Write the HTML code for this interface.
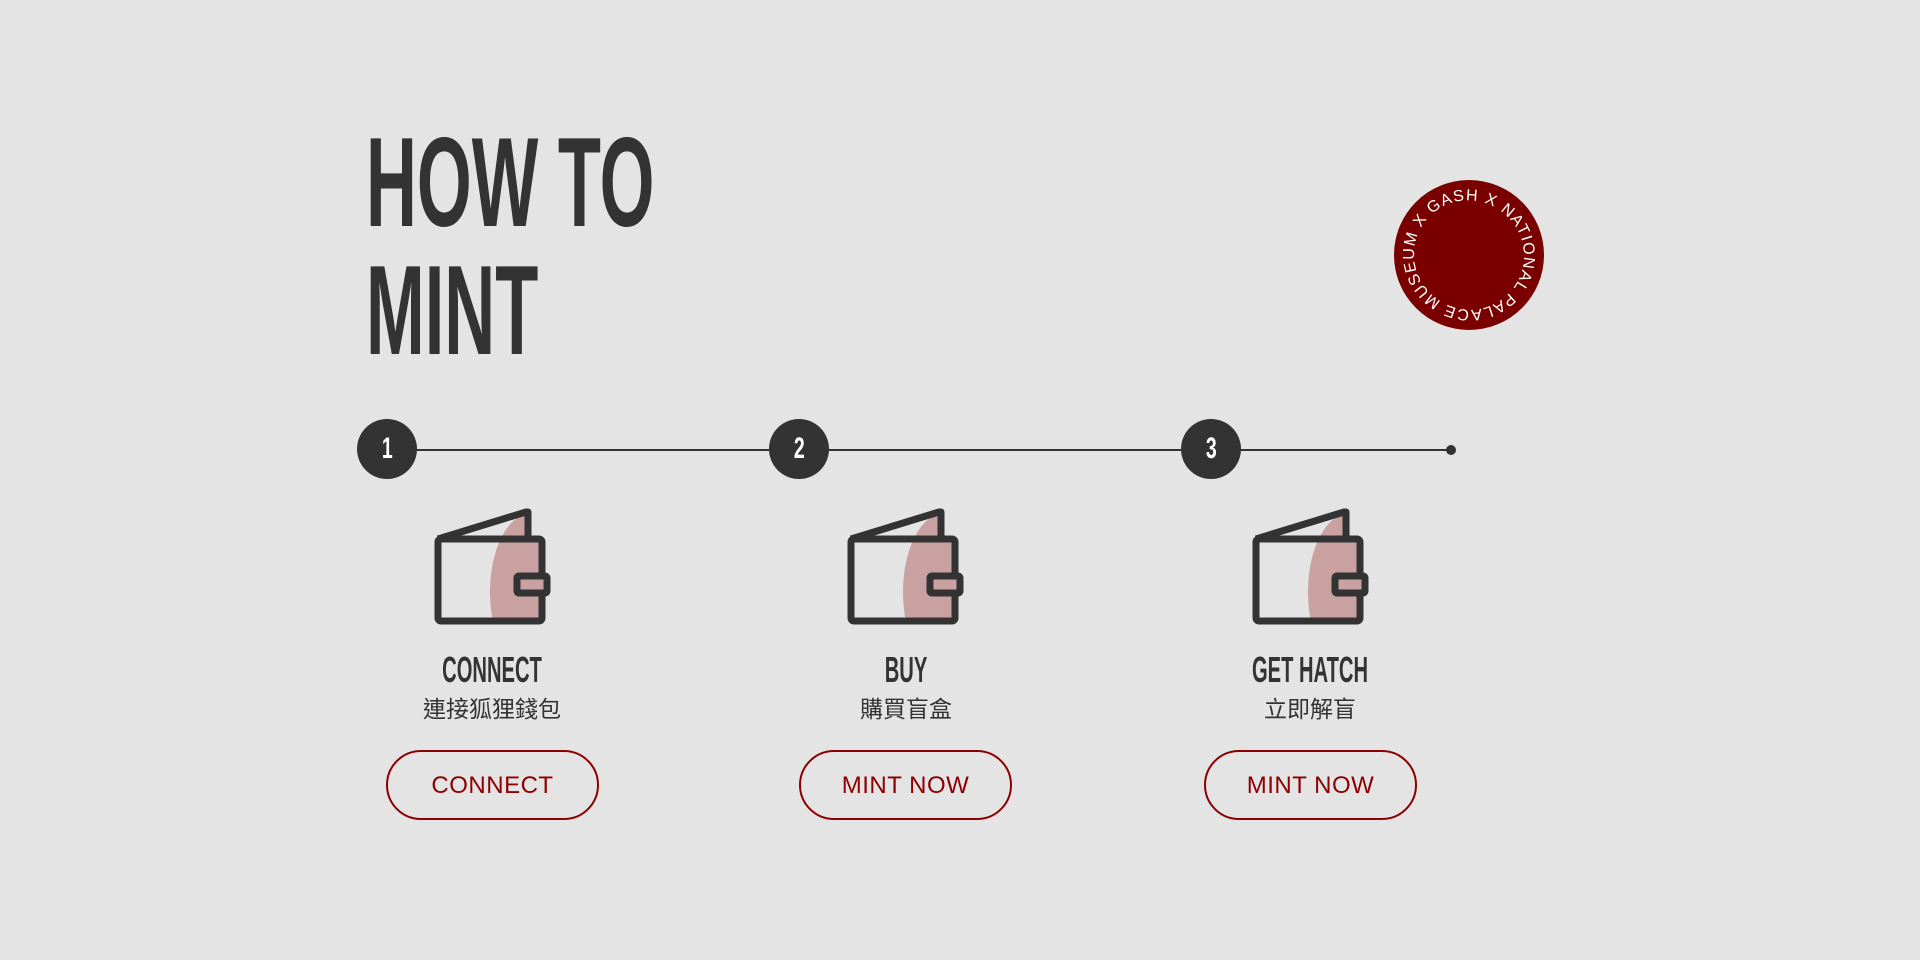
<!DOCTYPE html>
<html><head><meta charset="utf-8"><style>
html,body{margin:0;padding:0;width:1920px;height:960px;background:#e4e4e4;overflow:hidden;font-family:"Liberation Sans","Noto Sans CJK TC",sans-serif;color:#333}
.t{position:absolute;left:366px;font-weight:bold;font-size:127px;line-height:127px;transform:scaleX(0.555);transform-origin:left top;white-space:nowrap;color:#333}
.num{position:absolute;width:60px;height:60px;border-radius:50%;background:#333;color:#fff;font-size:30px;font-weight:bold;line-height:60px;text-align:center;top:419px}
.num span{display:inline-block;transform:scaleX(0.65)}
.col{position:absolute;width:300px;text-align:center}
.lab{font-weight:bold;font-size:36px;line-height:40px;transform:scaleX(0.56);color:#333}
.cn{font-size:23px;line-height:30px;color:#333;margin-top:4px}
.btn{position:absolute;width:209px;height:66px;border:2px solid #8b0000;border-radius:36px;color:#8b0000;font-size:24px;line-height:68px;text-align:center;top:750px;letter-spacing:0.5px}
.w{position:absolute;top:507px}
</style></head><body>
<div class="t" style="top:119px">HOW TO</div>
<div class="t" style="top:247px">MINT</div>

<svg style="position:absolute;left:1394px;top:180px" width="150" height="150" viewBox="0 0 150 150">
<circle cx="75" cy="75" r="75" fill="#7a0000"/>
<defs><path id="c" d="M106,30.8 A54,54 0 1,1 44,119.2 A54,54 0 1,1 106,30.8"/></defs>
<text font-family="Liberation Sans" font-size="16" fill="#fff"><textPath href="#c" startOffset="0" textLength="336" lengthAdjust="spacing">NATIONAL PALACE MUSEUM X GASH X</textPath></text>
</svg>

<div style="position:absolute;left:410px;top:449px;width:1041px;height:2px;background:#333"></div>
<div style="position:absolute;left:1446px;top:445px;width:10px;height:10px;border-radius:50%;background:#333"></div>
<div class="num" style="left:357px"><span>1</span></div>
<div class="num" style="left:769px"><span>2</span></div>
<div class="num" style="left:1181px"><span>3</span></div>

<svg width="0" height="0" style="position:absolute"><defs>
<g id="wal">
<clipPath id="cp"><path d="M4,34 L94,6 L94,34 L106,34 L106,114 L4,114Z"/></clipPath>
<ellipse cx="96" cy="85" rx="40" ry="78" fill="#c9a1a0" clip-path="url(#cp)"/>
<path d="M4,32 L92,5 L94,5 L94,32" fill="none" stroke="#333" stroke-width="7" stroke-linejoin="round"/>
<rect x="4" y="32" width="104" height="82" rx="3" fill="none" stroke="#333" stroke-width="7"/>
<rect x="83" y="69" width="30" height="17" rx="2" fill="#c9a1a0" stroke="#333" stroke-width="7"/>
</g></defs></svg>
<svg class="w" style="left:434px" width="120" height="120" viewBox="0 0 120 120"><use href="#wal"/></svg>
<svg class="w" style="left:847px" width="120" height="120" viewBox="0 0 120 120"><use href="#wal"/></svg>
<svg class="w" style="left:1252px" width="120" height="120" viewBox="0 0 120 120"><use href="#wal"/></svg>

<div class="col" style="left:342px;top:650px"><div class="lab">CONNECT</div><div class="cn">連接狐狸錢包</div></div>
<div class="col" style="left:756px;top:650px"><div class="lab">BUY</div><div class="cn">購買盲盒</div></div>
<div class="col" style="left:1160px;top:650px"><div class="lab">GET HATCH</div><div class="cn">立即解盲</div></div>

<div class="btn" style="left:386px">CONNECT</div>
<div class="btn" style="left:799px">MINT NOW</div>
<div class="btn" style="left:1204px">MINT NOW</div>
</body></html>
